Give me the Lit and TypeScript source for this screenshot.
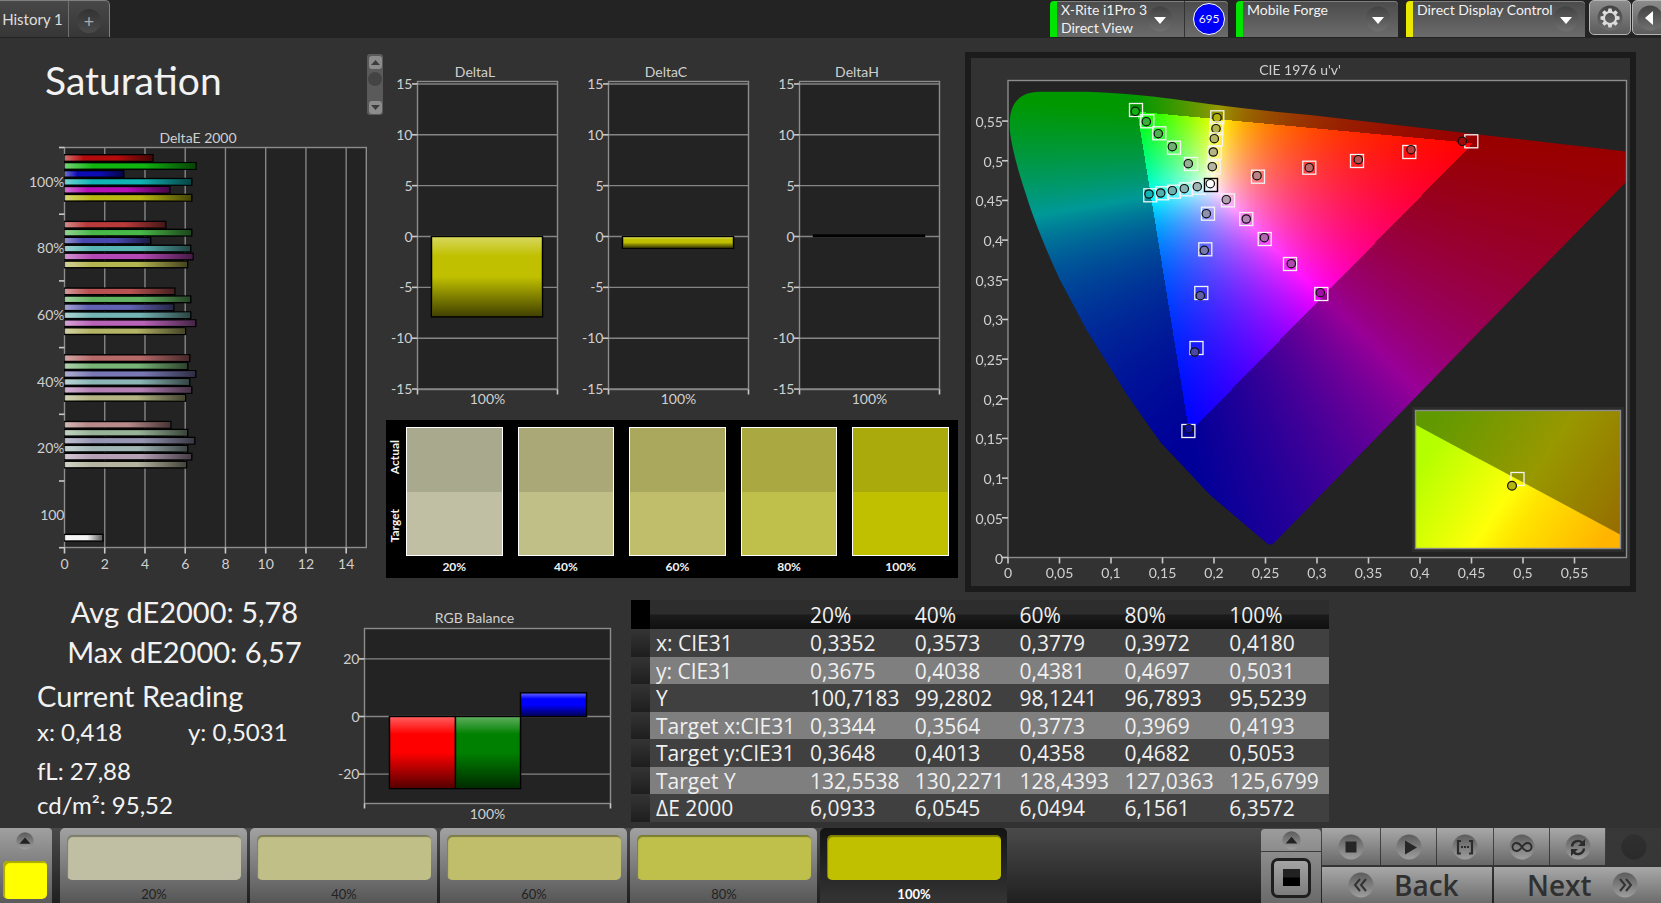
import { LitElement, html, svg, css } from "lit";
import { customElement, property } from "lit/decorators.js";
import { classMap } from "lit/directives/class-map.js";
import { styleMap } from "lit/directives/style-map.js";

const LEVELS = ["20%", "40%", "60%", "80%", "100%"];
const TARGETS = ["#c0bfa4", "#c1bf88", "#c0be6b", "#bfbf4c", "#c0c000"];
const ACTUALS = ["#a9a98e", "#aaa877", "#a9a85c", "#aaa840", "#abaa0c"];

const chartText = css`
  :host { display: block; min-width: 0; }
  svg { display: block; width: 100%; height: auto; }
  text { font: 14px Lato, "Liberation Sans", sans-serif; fill: #d0d0d0; }
  .middle { text-anchor: middle; }
  .end { text-anchor: end; }
  .plot { fill: #232323; stroke: #8c8c8c; stroke-width: 1.4; }
  .grid { stroke: #858585; stroke-width: 1.4; }
  .tick { stroke: #c8c8c8; stroke-width: 1.6; }
`;

/* ---------- horizontal DeltaE bars ---------- */

interface BarGroup { label: string; colors: string[]; values: number[]; }

const GROUPS: BarGroup[] = [
  { label: "100%", colors: ["#b40c0c", "#10b410", "#0c0cb4", "#10b4b4", "#b410b4", "#b8b810"], values: [4.43, 6.57, 2.98, 6.36, 5.27, 6.36] },
  { label: "80%", colors: ["#b83a3a", "#48b848", "#4848b0", "#58b4b4", "#b448b4", "#b4b450"], values: [5.07, 6.36, 4.32, 6.31, 6.42, 6.16] },
  { label: "60%", colors: ["#b85252", "#62b462", "#6262b4", "#74b4b4", "#b862b8", "#b4b466"], values: [5.52, 6.31, 5.47, 6.31, 6.56, 6.05] },
  { label: "40%", colors: ["#b86a6a", "#78b478", "#7878b4", "#8cb6b6", "#b480b4", "#b4b482"], values: [6.26, 6.16, 6.56, 6.26, 6.36, 6.05] },
  { label: "20%", colors: ["#b88a8a", "#98b498", "#9696b4", "#a2b6b6", "#b6a0b6", "#b4b4a0"], values: [5.32, 6.16, 6.51, 6.16, 6.36, 6.1] },
];

@customElement("delta-e-chart")
class DeltaEChart extends LitElement {
  static styles = chartText;

  render() {
    const left = 64.5, top = 20.5, unit = 20.12, band = 66.7, height = 400;
    const right = left + unit * 15;
    const bar = (y: number, value: number, color: string) => svg`
      <rect x=${left} y=${y} width=${value * unit - 0.7} height="6.6" fill=${color} stroke="#000" stroke-width="1.4"></rect>
      <rect x=${left} y=${y + 0.7} width=${value * unit - 1.4} height="5.2" fill="url(#shine)"></rect>`;
    return html`
      <svg viewBox="0 0 384 448" role="img" aria-label="DeltaE 2000">
        <defs>
          <linearGradient id="shine">
            <stop offset="0" stop-color="#fff" stop-opacity=".42"></stop>
            <stop offset=".22" stop-color="#fff" stop-opacity="0"></stop>
            <stop offset=".6" stop-color="#000" stop-opacity="0"></stop>
            <stop offset="1" stop-color="#000" stop-opacity=".62"></stop>
          </linearGradient>
        </defs>
        <text class="middle" x="198" y="16">DeltaE 2000</text>
        <rect class="plot" x=${left} y=${top} width=${right - left} height=${height}></rect>
        ${[0, 2, 4, 6, 8, 10, 12, 14].map((v) => {
          const x = left + v * unit;
          return svg`
            ${v ? svg`<line class="grid" x1=${x} x2=${x} y1=${top} y2=${top + height}></line>` : ""}
            <line class="tick" x1=${x} x2=${x} y1=${top + height} y2=${top + height + 6}></line>
            <text class="middle" x=${x} y=${top + height + 21}>${v}</text>`;
        })}
        ${[0, 1, 2, 3, 4, 5, 6].map((i) => svg`
          <line class="tick" x1=${left - 5.5} x2=${left} y1=${top + i * band} y2=${top + i * band}></line>`)}
        ${GROUPS.map((g, i) => svg`
          <text class="end" x=${left} y=${top + i * band + 39}>${g.label}</text>
          ${g.values.map((v, k) => bar(top + i * band + 7.2 + k * 7.95, v, g.colors[k]))}`)}
        <text class="end" x=${left} y=${top + 5 * band + 39}>100</text>
        ${bar(top + 5 * band + 53.4, 1.94, "#f4f4f4")}
      </svg>`;
  }
}

/* ---------- vertical bar charts ---------- */

interface Column { x: number; width: number; value: number; color: string; }

@customElement("column-chart")
class ColumnChart extends LitElement {
  @property() heading = "";
  @property({ type: Boolean }) balance = false;
  @property({ attribute: false }) columns: Column[] = [];

  static styles = chartText;

  render() {
    const g = this.balance
      ? { w: 281, h: 215, left: 30.5, width: 246, top: 20.5, height: 175, zero: 108.5, unit: 2.88, title: 140.5, titleY: 15, ticks: [20, 0, -20], labelY: 211 }
      : { w: 191, h: 354, left: 33.5, width: 140, top: 23.5, height: 308, zero: 178.5, unit: 10.17, title: 91, titleY: 19, ticks: [15, 10, 5, 0, -5, -10, -15], labelY: 346 };
    const bottom = g.top + g.height;
    const right = g.left + g.width;
    return html`
      <svg viewBox="0 0 ${g.w} ${g.h}" role="img" aria-label=${this.heading}>
        <defs>
          <linearGradient id="shine" x2="0" y2="1">
            <stop offset="0" stop-color="#fff" stop-opacity=".36"></stop>
            <stop offset=".24" stop-color="#fff" stop-opacity="0"></stop>
            <stop offset=".5" stop-color="#000" stop-opacity="0"></stop>
            <stop offset="1" stop-color="#000" stop-opacity=".66"></stop>
          </linearGradient>
        </defs>
        <text class="middle" x=${g.title} y=${g.titleY}>${this.heading}</text>
        <rect class="plot" x=${g.left} y=${g.top} width=${g.width} height=${g.height}></rect>
        ${g.ticks.map((v) => {
          const y = g.zero - v * g.unit;
          return svg`
            <line class="grid" x1=${g.left} x2=${right} y1=${y} y2=${y}></line>
            <line class="tick" x1=${g.left - 5.5} x2=${g.left} y1=${y} y2=${y}></line>
            <text class="end" x=${g.left - 5} y=${y + 5}>${v}</text>`;
        })}
        ${[g.left, right].map((x) => svg`<line class="tick" x1=${x} x2=${x} y1=${bottom} y2=${bottom + 5}></line>`)}
        ${this.columns.map((c) => {
          const h = Math.max(Math.abs(c.value) * g.unit, 1.4);
          const y = c.value > 0 ? g.zero - h : g.zero;
          return svg`
            <rect x=${g.left + c.x} y=${y} width=${c.width} height=${h} fill=${c.color} stroke="#000" stroke-width="1.5"></rect>
            <rect x=${g.left + c.x + 0.7} y=${y + 0.7} width=${c.width - 1.4} height=${Math.max(h - 1.4, 0)} fill="url(#shine)"></rect>`;
        })}
        <text class="middle" x=${g.left + g.width / 2} y=${g.labelY}>100%</text>
      </svg>`;
  }
}

/* ---------- chromaticity diagram ---------- */

const ORIGIN = { x: 37, y: 499.5 };
const SCALE = { u: 1030, v: 793.5 };
const PLOT = { right: 655, top: 22.5 };

// Spectral locus outline in plot pixels.
const LOCUS =
  "M39,74 C37,52 43,33.7 69,33.7 L115,33.7 C150,35 180,38 202,41 Q270,51 339,57 L660,94 L660,119" +
  " L510,272 L304,484 Q299,489 295,484.5 L239,437 Q212,408 190,385 Q172,360 154,333.7 L115.5,272 Q104,250 89,222" +
  " Q66,172 55.7,138.7 Q42,98 39,74 Z";

// u'v' to display RGB, scaled to the strongest channel; colours outside the gamut are dimmed.
function chroma(u: number, v: number): [number, number, number] {
  const X = (9 * u) / (4 * v), Z = (12 - 3 * u - 20 * v) / (4 * v);
  const r = 3.2406 * X - 1.5372 - 0.4986 * Z;
  const g = -0.9689 * X + 1.8758 + 0.0415 * Z;
  const b = 0.0557 * X - 0.204 + 1.057 * Z;
  const inside = r >= 0 && g >= 0 && b >= 0;
  const max = Math.max(r, g, b, 1e-6);
  const k = inside ? 255 : 152;
  const level = (c: number) => (k * Math.max(c, 0)) / max;
  return [level(r), level(g), level(b)];
}

// Target square and measured circle of every point: [tx, ty, mx, my, fill].
type Mark = [number, number, number, number, string];
const MARKS: Mark[] = [
  [165, 52, 164.3, 53.3, "#10b010"], [176.3, 63.3, 175.3, 63.7, "#38b038"], [188.3, 75.3, 187.3, 75.7, "#50b050"],
  [203, 89.7, 201.3, 88.7, "#70b070"], [220, 106, 217.3, 105.7, "#90b090"],
  [246.3, 59.3, 246, 59.7, "#b4b40c"], [245.3, 70.3, 245, 70.7, "#b4b44c"], [245, 81.3, 243.3, 80.7, "#b4b464"],
  [243.7, 95, 242.3, 94, "#b4b482"], [242.7, 109.3, 241.3, 108.7, "#b4b4a0"],
  [287, 118.7, 286, 117.7, "#b88484"], [338.3, 109.7, 338.3, 109.7, "#b86a6a"], [386, 103, 387.3, 101.7, "#b85252"],
  [438.3, 94, 440, 91.7, "#b83a3a"], [500.3, 83.3, 491.3, 83.3, "#a00808"],
  [179.3, 137.3, 178, 136, "#10b4b4"], [191.3, 135.3, 189.7, 135, "#50b0b0"], [203, 133.7, 201.3, 132.7, "#70b0b0"],
  [215, 131.3, 213.3, 130.7, "#88b4b4"], [227.7, 129.7, 226.3, 128.7, "#a0b4b4"],
  [257, 142.3, 255.3, 141.7, "#b4a0b4"], [275.3, 161, 275.3, 161, "#b482b4"], [293.7, 181, 293.3, 179.7, "#b464b4"],
  [319, 206, 320.3, 205.7, "#b048b0"], [350.3, 236, 349.3, 234.7, "#a010a8"],
  [237, 155.7, 235.3, 155.7, "#9090b0"], [234.3, 191.3, 233.3, 192.3, "#7878b0"], [230.3, 235, 229.3, 237.7, "#6060a8"],
  [225.5, 290, 223.7, 294, "#4848a8"], [217.4, 373, 217.9, 370.7, "#1010a0"],
];

@customElement("cie-chart")
class CieChart extends LitElement {
  static styles = [
    chartText,
    css`
      .stack { display: grid; }
      canvas, svg { grid-area: 1 / 1; display: block; width: 100%; height: auto; }
      .frame { fill: none; stroke: #8c8c8c; stroke-width: 1.4; }
      .target { fill: none; stroke: #f4f4f4; stroke-width: 1.3; }
      .reading { stroke: #111; stroke-width: 1.2; }
    `,
  ];

  firstUpdated() {
    const canvas = this.renderRoot.querySelector("canvas")!;
    const ctx = canvas.getContext("2d")!;
    const { width, height } = canvas;
    const layer = document.createElement("canvas");
    layer.width = width;
    layer.height = height;
    const lctx = layer.getContext("2d")!;
    const image = lctx.createImageData(width, height);
    for (let y = 0; y < height; y++) {
      for (let x = 0; x < width; x++) {
        const v = Math.max((ORIGIN.y - y) / SCALE.v, 0.001);
        const [r, g, b] = chroma((x - ORIGIN.x) / SCALE.u, v);
        const i = (y * width + x) * 4;
        image.data[i] = r;
        image.data[i + 1] = g;
        image.data[i + 2] = b;
        image.data[i + 3] = 255;
      }
    }
    lctx.putImageData(image, 0, 0);
    ctx.beginPath();
    ctx.rect(ORIGIN.x, PLOT.top, PLOT.right - ORIGIN.x, ORIGIN.y - PLOT.top);
    ctx.fillStyle = "#232323";
    ctx.fill();
    ctx.clip();
    ctx.clip(new Path2D(LOCUS));
    ctx.drawImage(layer, 0, 0);
  }

  render() {
    const steps = Array.from({ length: 12 }, (_, i) => i * 0.05);
    const label = (v: number) => String(Math.round(v * 100) / 100).replace(".", ",");
    const square = (x: number, y: number, cls = "target") => svg`
      <rect class=${cls} x=${x - 6.5} y=${y - 6.5} width="13" height="13"></rect>`;
    return html`
      <div class="stack">
        <canvas width="659" height="528"></canvas>
        <svg viewBox="0 0 659 528" role="img" aria-label="CIE 1976 u'v'">
          <defs>
            <linearGradient id="bright" gradientUnits="userSpaceOnUse" x1="466" y1="382" x2="628" y2="490">
              <stop offset="0" stop-color="#b4ff00"></stop>
              <stop offset=".46" stop-color="#ffff08"></stop>
              <stop offset=".6" stop-color="#ffe400"></stop>
              <stop offset="1" stop-color="#ffb400"></stop>
            </linearGradient>
            <linearGradient id="dim" gradientUnits="userSpaceOnUse" x1="466" y1="355" x2="650" y2="475">
              <stop offset="0" stop-color="#609a00"></stop>
              <stop offset=".52" stop-color="#989800"></stop>
              <stop offset="1" stop-color="#966c00"></stop>
            </linearGradient>
          </defs>
          <text class="middle" x="329" y="17">CIE 1976 u'v'</text>
          <rect class="frame" x=${ORIGIN.x} y=${PLOT.top} width=${PLOT.right - ORIGIN.x + 0.5} height=${ORIGIN.y - PLOT.top}></rect>
          ${steps.map((s) => {
            const x = ORIGIN.x + s * SCALE.u, y = ORIGIN.y - s * SCALE.v;
            return svg`
              <line class="tick" x1=${x} x2=${x} y1=${ORIGIN.y} y2=${ORIGIN.y + 6}></line>
              <text class="middle" x=${x} y="520">${label(s)}</text>
              <line class="tick" x1=${ORIGIN.x - 6} x2=${ORIGIN.x} y1=${y} y2=${y}></line>
              <text class="end" x=${ORIGIN.x - 5} y=${y + 6}>${label(s)}</text>`;
          })}
          ${MARKS.map(([tx, ty, mx, my, fill]) => svg`
            ${square(tx, ty)}
            <circle class="reading" cx=${mx} cy=${my} r="4.2" fill=${fill}></circle>`)}
          <rect x="233.5" y="120.5" width="13" height="13" fill="none" stroke="#000" stroke-width="1.4"></rect>
          <circle class="reading" cx="239.3" cy="125.7" r="4.2" fill="#fff"></circle>
          <rect x="441" y="349" width="212" height="145" fill="#2d2d2d"></rect>
          <rect x="444" y="352" width="206" height="139" fill="url(#dim)"></rect>
          <path d="M444,366.5 L650,477 V491 H444 Z" fill="url(#bright)"></path>
          <rect class="frame" x="444.5" y="352.5" width="205" height="138"></rect>
          ${square(546.5, 421)}
          <circle class="reading" cx="541" cy="427.7" r="4.4" fill="#b4b40c"></circle>
        </svg>
      </div>`;
  }
}

/* ---------- data table ---------- */

const ROWS: [string, string[]][] = [
  ["x: CIE31", ["0,3352", "0,3573", "0,3779", "0,3972", "0,4180"]],
  ["y: CIE31", ["0,3675", "0,4038", "0,4381", "0,4697", "0,5031"]],
  ["Y", ["100,7183", "99,2802", "98,1241", "96,7893", "95,5239"]],
  ["Target x:CIE31", ["0,3344", "0,3564", "0,3773", "0,3969", "0,4193"]],
  ["Target y:CIE31", ["0,3648", "0,4013", "0,4358", "0,4682", "0,5053"]],
  ["Target Y", ["132,5538", "130,2271", "128,4393", "127,0363", "125,6799"]],
  ["ΔE 2000", ["6,0933", "6,0545", "6,0494", "6,1561", "6,3572"]],
];

@customElement("reading-table")
class ReadingTable extends LitElement {
  static styles = css`
    :host { display: block; min-width: 0; }
    table {
      width: 100%; table-layout: fixed; border-collapse: collapse;
      font: 21px/26px "Open Sans", "Noto Sans", sans-serif; color: #f0f0f0;
    }
    th, td { padding: 0 0 0 5px; height: 28px; box-sizing: border-box; text-align: left; font-weight: 400; white-space: nowrap; }
    .grip { width: 19px; background: linear-gradient(#343434, #1e1e1e); }
    .name { width: 155px; padding-left: 6px; }
    thead th { height: 29px; background: linear-gradient(#2d2d2d 0 48%, #1b1b1b 52%, #101010); }
    thead .grip { background: #000; }
    tbody tr { background: #404040; }
    tbody tr:nth-child(even) { background: #7f7f7f; }
    tbody tr:nth-child(even) > * { height: 27px; }
  `;

  render() {
    return html`
      <table>
        <thead>
          <tr>
            <th class="grip"></th>
            <th class="name"></th>
            ${LEVELS.map((l) => html`<th scope="col">${l}</th>`)}
          </tr>
        </thead>
        <tbody>
          ${ROWS.map(([name, cells]) => html`
            <tr>
              <td class="grip"></td>
              <th class="name" scope="row">${name}</th>
              ${cells.map((c) => html`<td>${c}</td>`)}
            </tr>`)}
        </tbody>
      </table>`;
  }
}

/* ---------- page ---------- */

const round = (content: unknown, size = 26) => html`
  <svg class="round" width=${size} height=${size} viewBox="-13 -13 26 26" aria-hidden="true">
    <circle r="12.5" class="disc"></circle>${content}
  </svg>`;

const ICONS: Record<string, unknown> = {
  down: svg`<path d="M-6,-2 H6 L0,5 Z" fill="#fff"></path>`,
  up: svg`<path d="M-8,4 H8 L0,-5 Z" fill="#222"></path>`,
  left: svg`<path d="M3,-7 V7 L-5,0 Z" fill="#fff"></path>`,
  gear: svg`
    <circle r="6" fill="none" stroke="#dcdcdc" stroke-width="2"></circle>
    ${[0, 45, 90, 135, 180, 225, 270, 315].map((a) => svg`<path d="M-1.6,-9.5 h3.2 l.6,3.4 h-4.4 z" fill="#dcdcdc" transform="rotate(${a})"></path>`)}`,
  stop: svg`<rect x="-5.5" y="-5.5" width="11" height="11" fill="#262626"></rect>`,
  play: svg`<path d="M-4,-6.5 L8,0.5 L-4,7.5 Z" fill="#262626"></path>`,
  range: svg`<path d="M-4,-6 H-7 V6.5 H-4 M4,-6 H7 V6.5 H4 M-4,0 h2 M-1,0 h2 M2,0 h2" fill="none" stroke="#2c2c2c" stroke-width="2.2"></path>`,
  loop: svg`<path d="M0,0 C-2,-3 -4,-4 -5.5,-4 A4,4 0 0 0 -5.5,4 C-4,4 -2,3 0,0 C2,-3 4,-4 5.5,-4 A4,4 0 0 1 5.5,4 C4,4 2,3 0,0 Z" fill="none" stroke="#2c2c2c" stroke-width="1.9"></path>`,
  refresh: svg`
    <path d="M-6,-0.5 A6,6 0 0 1 4,-4.5 M6,1.5 A6,6 0 0 1 -4,5.5" fill="none" stroke="#2c2c2c" stroke-width="2.4"></path>
    <path d="M7,-8 V-1 H0 Z M-7,9 V2 H0 Z" fill="#2c2c2c"></path>`,
  back: svg`<path d="M-1,-6 L-6,0 L-1,6 M5,-6 L0,0 L5,6" fill="none" stroke="#333" stroke-width="2"></path>`,
  next: svg`<path d="M1,-6 L6,0 L1,6 M-5,-6 L0,0 L-5,6" fill="none" stroke="#333" stroke-width="2"></path>`,
  none: "",
};

@customElement("app-root")
class AppRoot extends LitElement {
  static styles = css`
    :host {
      display: flex; flex-direction: column; min-height: 100vh; overflow: hidden;
      background: #323232; color: #f2f2f2;
      font: 14px/18px Lato, "Liberation Sans", sans-serif;
    }
    button { margin: 0; padding: 0; border: 0; background: none; color: inherit; font: inherit; }
    h1, h2, p { margin: 0; font-weight: 400; }
    .round { display: block; flex: none; }
    .disc { fill: url(#disc); }
    header .disc { fill: url(#disc-dark); }
    .defs { position: absolute; }

    header { display: flex; height: 38px; background: #232323; }
    .tabs {
      display: flex; width: 110px; height: 37px; box-sizing: border-box;
      border: solid #808080; border-width: 1px 1px 0 0; border-radius: 0 5px 0 0;
      background: linear-gradient(#484848, #363636);
    }
    .tab { width: 69px; box-sizing: border-box; padding-right: 3px; border-right: 1px solid #707070; font-size: 15px; line-height: 37px; text-align: center; color: #dedede; }
    .add { display: grid; place-items: center; flex: 1; padding-top: 4px; }
    .plus {
      width: 24px; height: 24px; border-radius: 50%; font-size: 18px; line-height: 24px; color: #aaa;
      background: linear-gradient(#333, #4a4a4a);
    }
    .devices { display: flex; margin-left: auto; gap: 8px; }
    .device {
      display: flex; height: 36px; margin-top: 1px; box-sizing: border-box; border-left: 7px solid #00e400;
      border-top-left-radius: 4px; border-top-right-radius: 4px;
      background: linear-gradient(#4b4b4b, #6b6b6b); box-shadow: inset 0 1px #808080;
    }
    .device.yellow { border-left-color: #e8e800; }
    .device p { flex: 1; padding-left: 4px; white-space: nowrap; }
    .pick { display: grid; place-items: center; padding-right: 7px; }
    .probe .pick { padding-right: 11px; }
    .probe { width: 178px; }
    .forge { width: 162px; }
    .display { width: 179px; }
    .count { display: grid; place-items: center; width: 44px; padding-left: 5px; box-sizing: border-box; border-left: 1px solid #333; }
    .bubble {
      width: 30px; height: 30px; border: 1px solid #fff; border-radius: 50%; background: #0000fa;
      font-size: 12px; line-height: 30px; text-align: center;
    }
    .tools { display: flex; gap: 1px; width: 72px; margin-left: -4px; overflow: hidden; }
    .tool {
      display: grid; place-items: center; flex: none; width: 42px; height: 35px; box-sizing: border-box;
      border: 1px solid #b4b4b4; border-radius: 5px; background: linear-gradient(#8c8c8c, #5c5c5c);
    }
    .tool.side { width: 36px; }

    main { flex: 1; }
    .top { display: grid; grid-template-columns: minmax(0, 384fr) minmax(0, 581fr) minmax(0, 671fr); padding-right: 25px; }
    .heading { display: flex; justify-content: space-between; align-items: flex-start; padding: 16px 1px 12px 45px; }
    h1 { font-size: 39px; line-height: 52px; }
    .scroller {
      display: flex; flex-direction: column; align-items: center; width: 16px; height: 61px; box-sizing: border-box;
      padding: 2px 0 1px; border-radius: 3px; background: #5a5a5a;
    }
    .scroller button { width: 13px; height: 13px; border-radius: 3px; background: #8c8c8c; }
    .scroller svg { display: block; margin: auto; }
    .thumb { width: 14px; height: 14px; margin: 3px 0 auto; border-radius: 50%; background: #444; }
    .deltas { display: grid; grid-template-columns: repeat(3, minmax(0, 1fr)); padding: 20px 8px 8px 0; }
    .patches {
      display: grid; grid-template-columns: 20px minmax(0, 1fr); margin: 0 7px 0 2px; padding: 7px 9px 0 0;
      background: #000; font-size: 12px; font-weight: 700;
    }
    .sides { display: grid; grid-template-rows: 1fr 1fr 14px; gap: 8px; justify-items: center; align-items: center; }
    .sides span { writing-mode: vertical-rl; transform: rotate(180deg); padding-left: 4px; }
    .swatches { display: flex; gap: 15px; }
    .swatch { flex: 1; margin: 0; }
    .pair { display: grid; height: 129px; box-sizing: border-box; border: 1px solid #fff; }
    .swatch figcaption { line-height: 22px; text-align: center; }
    .cie { align-self: start; margin-top: 14px; border: 6px solid #1b1b1b; }

    .bottom { display: grid; grid-template-columns: minmax(0, 334fr) minmax(0, 297fr) minmax(0, 698fr) minmax(0, 332fr); }
    .summary { font-size: 29px; line-height: 40px; padding-left: 37px; }
    .summary .mid { margin-right: 2px; text-align: center; }
    .summary h2 { margin-top: 6px; font-size: 29px; line-height: 36px; }
    .pairline { display: grid; grid-template-columns: 151px 1fr; font-size: 24px; line-height: 36px; margin-bottom: 4px; }
    .line { font-size: 24px; line-height: 34px; }
    .balance { padding: 16px 16px 0 0; }
    .readings { padding-top: 8px; }

    footer { display: flex; height: 75px; background: linear-gradient(#4a4a4a, #202020); }
    .current {
      display: flex; flex-direction: column; align-items: center; justify-content: space-between; width: 52px;
      margin-right: 8px; padding: 4px 5px 4px 3px; box-sizing: border-box; border-radius: 0 4px 0 0;
      background: linear-gradient(#a0a0a0, #5a5a5a);
    }
    .now { width: 44px; height: 38px; border-radius: 5px; background: #ff0; box-shadow: inset 2px 2px 1px #a8a800; }
    .levels { display: flex; gap: 3px; }
    .level {
      display: flex; flex-direction: column; width: 187px; padding: 7px 6px 0 7px; box-sizing: border-box;
      border-radius: 5px 5px 0 0; background: linear-gradient(#a2a2a2, #565656); color: #222;
      font-size: 13px; line-height: 18px; text-align: center;
    }
    .level.on { background: linear-gradient(#141414, #343434); color: #fff; font-weight: 700; }
    .chip { flex: none; height: 45px; margin-bottom: 5px; border-radius: 5px; box-shadow: inset 1px 2px 1px rgba(0, 0, 0, .35); }
    .controls { display: grid; grid-template-columns: 60px 339px; gap: 1px; margin-left: auto; }
    .source { display: grid; grid-template-rows: 22px 1fr; gap: 1px; padding-top: 1px; justify-items: stretch; }
    .source > * { display: grid; place-items: center; background: linear-gradient(#9c9c9c, #8c8c8c); }
    .source .lift { border-radius: 4px 4px 0 0; }
    .source .pattern { background: linear-gradient(#8c8c8c, #6a6a6a); }
    .frame {
      display: grid; place-items: center; width: 34px; height: 34px; border: 3px solid #1e1e1e; border-radius: 7px;
      background: linear-gradient(#a4a4a4, #7c7c7c);
    }
    .dot { width: 17px; height: 17px; background: linear-gradient(#222 48%, #000 52%); }
    .deck { display: grid; grid-template-rows: 37px 36px; gap: 2px; }
    .keys { display: grid; grid-template-columns: 58px 55px 56px 55px 55px 1fr; gap: 1px; }
    .key { display: grid; place-items: center; background: linear-gradient(#a8a8a8, #686868); }
    .key.off { background: linear-gradient(#2c2c2c, #383838); opacity: .6; }
    .key.off .disc { fill: #222; }
    .steps { display: grid; grid-template-columns: 170px 1fr; gap: 2px; }
    .step {
      display: flex; align-items: center; gap: 20px; padding-left: 26px; background: linear-gradient(#a8a8a8, #6c6c6c);
      font: 600 28px/34px "Open Sans", "Noto Sans", sans-serif; color: #303030;
    }
    .step.forward { padding-left: 33px; }
  `;

  private discDefs() {
    return html`
      <svg class="defs" width="0" height="0" aria-hidden="true">
        <defs>
          <linearGradient id="disc" x2="0" y2="1">
            <stop offset="0" stop-color="#5c5c5c"></stop>
            <stop offset="1" stop-color="#9e9e9e"></stop>
          </linearGradient>
          <linearGradient id="disc-dark" x2="0" y2="1">
            <stop offset="0" stop-color="#424242"></stop>
            <stop offset="1" stop-color="#707070"></stop>
          </linearGradient>
        </defs>
      </svg>`;
  }

  private device(kind: string, lines: string[], count?: string) {
    return html`
      <div class=${classMap({ device: true, [kind]: true, yellow: kind === "display" })}>
        <p>${lines[0]}${lines[1] ? html`<br />${lines[1]}` : ""}</p>
        <button class="pick" aria-label="Choose ${lines[0]}">${round(ICONS.down)}</button>
        ${count ? html`<div class="count"><div class="bubble">${count}</div></div>` : ""}
      </div>`;
  }

  private key(name: string, label: string) {
    return html`<button class=${classMap({ key: true, off: name === "none" })} aria-label=${label}>${round(ICONS[name])}</button>`;
  }

  render() {
    const yellow = (value: number): Column[] => [{ x: 14, width: 111, value, color: "#c0c000" }];
    const rgb: Column[] = [
      { x: 25, width: 66, value: -25, color: "#ff0000" },
      { x: 91, width: 65, value: -25, color: "#008000" },
      { x: 156, width: 66, value: 8.2, color: "#0000ff" },
    ];
    return html`
      ${this.discDefs()}
      <header>
        <div class="tabs">
          <button class="tab">History 1</button>
          <button class="add" aria-label="Add history"><span class="plus">+</span></button>
        </div>
        <div class="devices">
          ${this.device("probe", ["X-Rite i1Pro 3", "Direct View"], "695")}
          ${this.device("forge", ["Mobile Forge"])}
          ${this.device("display", ["Direct Display Control"])}
          <div class="tools">
            <button class="tool" aria-label="Settings">${round(ICONS.gear)}</button>
            <button class="tool side" aria-label="Collapse">${round(ICONS.left)}</button>
          </div>
        </div>
      </header>

      <main>
        <section class="top">
          <div>
            <div class="heading">
              <h1>Saturation</h1>
              <div class="scroller">
                <button aria-label="Scroll up"><svg width="9" height="5"><path d="M0,5 H9 L4.5,0 Z" fill="#3c3c3c"></path></svg></button>
                <div class="thumb"></div>
                <button aria-label="Scroll down"><svg width="9" height="5"><path d="M0,0 H9 L4.5,5 Z" fill="#3c3c3c"></path></svg></button>
              </div>
            </div>
            <delta-e-chart></delta-e-chart>
          </div>
          <div>
            <div class="deltas">
              <column-chart heading="DeltaL" .columns=${yellow(-7.9)}></column-chart>
              <column-chart heading="DeltaC" .columns=${yellow(-1.15)}></column-chart>
              <column-chart heading="DeltaH" .columns=${yellow(0.1)}></column-chart>
            </div>
            <div class="patches">
              <div class="sides"><span>Actual</span><span>Target</span></div>
              <div class="swatches">
                ${LEVELS.map((level, i) => html`
                  <figure class="swatch">
                    <div class="pair">
                      <div style=${styleMap({ background: ACTUALS[i] })}></div>
                      <div style=${styleMap({ background: TARGETS[i] })}></div>
                    </div>
                    <figcaption>${level}</figcaption>
                  </figure>`)}
              </div>
            </div>
          </div>
          <cie-chart class="cie"></cie-chart>
        </section>

        <section class="bottom">
          <div class="summary">
            <p class="mid">Avg dE2000: 5,78</p>
            <p class="mid">Max dE2000: 6,57</p>
            <h2>Current Reading</h2>
            <div class="pairline"><span>x: 0,418</span><span>y: 0,5031</span></div>
            <p class="line">fL: 27,88</p>
            <p class="line">cd/m²: 95,52</p>
          </div>
          <column-chart class="balance" heading="RGB Balance" balance .columns=${rgb}></column-chart>
          <reading-table class="readings"></reading-table>
        </section>
      </main>

      <footer>
        <div class="current">
          <button aria-label="Expand patches">${round(ICONS.up, 18)}</button>
          <div class="now"></div>
        </div>
        <div class="levels">
          ${LEVELS.map((level, i) => html`
            <button class=${classMap({ level: true, on: i === 4 })}>
              <span class="chip" style=${styleMap({ background: TARGETS[i] })}></span>
              <span>${level}</span>
            </button>`)}
        </div>
        <div class="controls">
          <div class="source">
            <button class="lift" aria-label="Expand patterns">${round(ICONS.up, 19)}</button>
            <button class="pattern" aria-label="Window pattern"><span class="frame"><span class="dot"></span></span></button>
          </div>
          <div class="deck">
            <div class="keys">
              ${this.key("stop", "Stop")}${this.key("play", "Play")}${this.key("range", "Read range")}
              ${this.key("loop", "Continuous")}${this.key("refresh", "Refresh")}${this.key("none", "Record")}
            </div>
            <div class="steps">
              <button class="step">${round(ICONS.back)}<span>Back</span></button>
              <button class="step forward"><span>Next</span>${round(ICONS.next)}</button>
            </div>
          </div>
        </div>
      </footer>`;
  }
}
